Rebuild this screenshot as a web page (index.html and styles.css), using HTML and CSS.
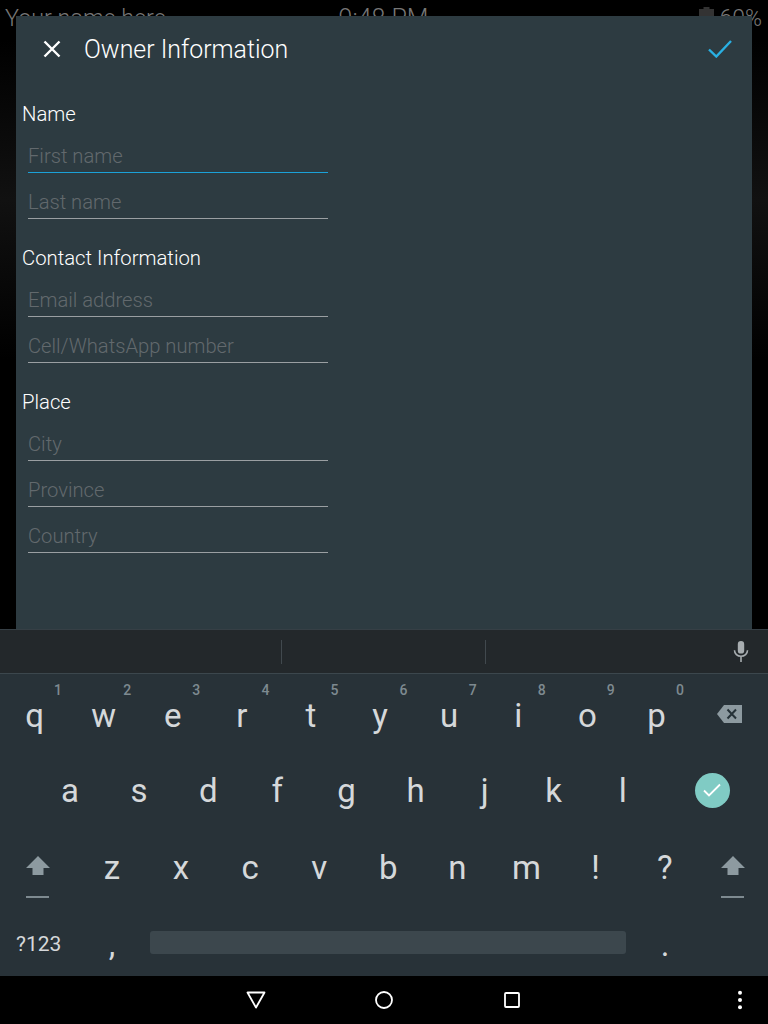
FILE: index.html
```html
<!DOCTYPE html>
<html lang="en">
<head>
  <meta charset="UTF-8" />
  <meta name="viewport" content="width=device-width, initial-scale=1.0" />
  <title>Owner Information</title>
  <link rel="stylesheet" href="styles.css">
</head>
<body>
  <div class="backdrop">
    <div class="status-bar">
      <span class="status-name">Your name here</span>
      <span class="status-time">9:48 PM</span>
      <span class="status-battery">
        <svg width="15" height="22" viewBox="0 0 15 22"><path d="M4.500 0h6v2H15v20H0V2h4.500z" fill="#333"/></svg>
        60%
      </span>
    </div>

    <div class="dialog">
      <header class="dialog-header">
        <button class="icon-btn close-btn" aria-label="Close">
          <svg width="18" height="18" viewBox="0 0 18 18"><path d="M1.500 1.500l15 15M16.500 1.500l-15 15" stroke="#fff" stroke-width="2.400" fill="none"/></svg>
        </button>
        <h1>Owner Information</h1>
        <button class="icon-btn save-btn" aria-label="Save">
          <svg width="24" height="18" viewBox="0 0 24 18"><path d="M1 9.500l7.300 7L23 1" stroke="#29b0e3" stroke-width="2.400" fill="none"/></svg>
        </button>
      </header>

      <form class="owner-form">
        <h2>Name</h2>
        <input class="field focused" type="text" placeholder="First name">
        <input class="field" type="text" placeholder="Last name">

        <h2>Contact Information</h2>
        <input class="field" type="text" placeholder="Email address">
        <input class="field" type="text" placeholder="Cell/WhatsApp number">

        <h2>Place</h2>
        <input class="field" type="text" placeholder="City">
        <input class="field" type="text" placeholder="Province">
        <input class="field" type="text" placeholder="Country">
      </form>
    </div>
  </div>

  <div class="keyboard">
    <div class="suggestions">
      <div class="suggestion"></div>
      <div class="suggestion"></div>
      <div class="suggestion mic-slot">
        <svg width="16" height="21" viewBox="0 0 16 21"><path d="M8 0a3.200 3.200 0 0 0-3.200 3.200v6.200a3.200 3.200 0 0 0 6.400 0V3.200A3.200 3.200 0 0 0 8 0z" fill="#a7adb0"/><path d="M1.500 9.200c0 3.600 2.900 6 6.500 6s6.500-2.400 6.500-6M8 15v6" stroke="#a7adb0" stroke-width="1.600" fill="none"/></svg>
      </div>
    </div>

    <div class="row row-top">
      <div class="key">q<span class="hint">1</span></div>
      <div class="key">w<span class="hint">2</span></div>
      <div class="key">e<span class="hint">3</span></div>
      <div class="key">r<span class="hint">4</span></div>
      <div class="key">t<span class="hint">5</span></div>
      <div class="key">y<span class="hint">6</span></div>
      <div class="key">u<span class="hint">7</span></div>
      <div class="key">i<span class="hint">8</span></div>
      <div class="key">o<span class="hint">9</span></div>
      <div class="key">p<span class="hint">0</span></div>
      <div class="key key-end">
        <svg class="del-icon" width="25" height="18" viewBox="0 0 25 18"><path d="M7 0h18v18H7L0 9z" fill="#8d9aa0"/><path d="M10.500 4.500l8.500 9M19 4.500l-8.500 9" stroke="#263238" stroke-width="2" fill="none"/></svg>
      </div>
    </div>

    <div class="row row-home">
      <div class="key">a</div>
      <div class="key">s</div>
      <div class="key">d</div>
      <div class="key">f</div>
      <div class="key">g</div>
      <div class="key">h</div>
      <div class="key">j</div>
      <div class="key">k</div>
      <div class="key">l</div>
      <div class="key key-enter">
        <span class="enter-circle">
          <svg width="18" height="14" viewBox="0 0 18 14"><path d="M1 7.500l5 5L17 1.500" stroke="#fff" stroke-width="1.800" fill="none"/></svg>
        </span>
      </div>
    </div>

    <div class="row row-shift">
      <div class="key key-wide">
        <svg class="shift-icon" width="24" height="44" viewBox="0 0 24 44"><path d="M12 0l12 12h-6.500v7h-11v-7H0z" fill="#8d9aa0"/><rect y="40" width="23" height="2" fill="#7e8a90"/></svg>
      </div>
      <div class="key">z</div>
      <div class="key">x</div>
      <div class="key">c</div>
      <div class="key">v</div>
      <div class="key">b</div>
      <div class="key">n</div>
      <div class="key">m</div>
      <div class="key">!</div>
      <div class="key">?</div>
      <div class="key key-end">
        <svg class="shift-icon" width="24" height="44" viewBox="0 0 24 44"><path d="M12 0l12 12h-6.500v7h-11v-7H0z" fill="#8d9aa0"/><rect y="40" width="23" height="2" fill="#7e8a90"/></svg>
      </div>
    </div>

    <div class="row row-bottom">
      <div class="key key-wide key-symbols">?123</div>
      <div class="key">,</div>
      <div class="space-key"><span class="space-bar"></span></div>
      <div class="key">.</div>
    </div>
  </div>

  <nav class="nav-bar">
    <svg class="nav-back" width="20" height="18" viewBox="0 0 20 18"><path d="M1.500 1.500h17L10 16.500z" stroke="#fff" stroke-width="1.800" stroke-linejoin="round" fill="none"/></svg>
    <svg class="nav-home" width="20" height="20" viewBox="0 0 20 20"><circle cx="10" cy="10" r="8" stroke="#fff" stroke-width="1.800" fill="none"/></svg>
    <svg class="nav-recent" width="20" height="18" viewBox="0 0 20 18"><rect x="3" y="2" width="14" height="14" rx="1" stroke="#fff" stroke-width="1.800" fill="none"/></svg>
    <svg class="nav-more" width="6" height="20" viewBox="0 0 6 20"><circle cx="3" cy="2.700" r="2" fill="#fff"/><circle cx="3" cy="10" r="2" fill="#fff"/><circle cx="3" cy="17.300" r="2" fill="#fff"/></svg>
  </nav>
</body>
</html>
```

FILE: styles.css
```css
* {
  box-sizing: border-box;
  margin: 0;
  padding: 0;
}
body {
  font-family: Roboto, "Liberation Sans", sans-serif;
  background-color: #000;
  color: #fff;
  width: 768px;
  height: 1024px;
  overflow: hidden;
  display: flex;
  flex-direction: column;
}

.backdrop {
  position: relative;
  height: 629px;
  padding: 16px 16px 0;
  background: linear-gradient(#000 40px, #111 200px, #000 360px);
}

.status-bar {
  position: absolute;
  top: 2px;
  left: 5px;
  right: 6px;
  height: 32px;
  display: grid;
  grid-template-columns: 1fr auto 1fr;
  align-items: center;
  font-size: 23px;
  font-weight: 300;
  color: #777;
}

.status-name {
  font-size: 23.300px;
}

.status-time {
  font-size: 25px;
}

.status-battery {
  justify-self: end;
  display: flex;
  align-items: center;
  gap: 5px;
}

.dialog {
  position: relative;
  height: 100%;
  background-color: #2d3b41;
}

.dialog-header {
  height: 59px;
  display: flex;
  align-items: center;
  padding: 11px 20px 2px 27px;
}

.dialog-header h1 {
  font-size: 24.900px;
  font-weight: 300;
  flex: 1;
  margin-left: 23px;
  margin-bottom: 2px;
}

.icon-btn {
  background: none;
  border: none;
  display: flex;
  margin-bottom: 2px;
}

.owner-form {
  display: flex;
  flex-direction: column;
  align-items: flex-start;
  padding: 0 6px;
}

.owner-form h2 {
  font-size: 20.300px;
  font-weight: 300;
  line-height: 26px;
  padding-top: 26px;
  height: 52px;
}

.field {
  width: 300px;
  height: 46px;
  margin-left: 6px;
  padding-top: 12px;
  background: none;
  border: none;
  border-bottom: 1px solid #9a9fa2;
  outline: none;
  font-family: inherit;
  font-size: 20.200px;
  font-weight: 300;
  color: #fff;
}

.field::placeholder {
  color: #62696d;
  opacity: 1;
}

.field.focused {
  border-bottom-color: #1ba1d8;
}

.keyboard {
  height: 347px;
  background-color: #283238;
  border-top: 1px solid #363f45;
  display: flex;
  flex-direction: column;
}

.suggestions {
  height: 44px;
  flex-shrink: 0;
  background-color: #23282b;
  border-bottom: 1px solid #3c474d;
  display: flex;
  align-items: center;
}

.suggestion {
  height: 24px;
  width: 204px;
}

.suggestion:first-child {
  width: 282px;
  border-right: 1px solid #41494e;
}

.suggestion:nth-child(2) {
  border-right: 1px solid #41494e;
}

.mic-slot {
  flex: 1;
  display: flex;
  justify-content: flex-end;
  align-items: center;
  padding-right: 19px;
}

.row {
  flex: 1;
  display: flex;
}

.row-top .key {
  padding-top: 8px;
}

.row-home {
  padding-left: 35.500px;
}

.row-home .key {
  padding-top: 6px;
}

.row-shift .key {
  padding-top: 10px;
}

.row-bottom .key {
  padding-top: 12px;
}

.key {
  position: relative;
  width: 69.100px;
  display: flex;
  justify-content: center;
  align-items: center;
  font-size: 33px;
  font-weight: 400;
  color: #d5d8da;
}

.hint {
  position: absolute;
  top: 8px;
  right: 4px;
  width: 14px;
  text-align: center;
  font-size: 14px;
  font-weight: 500;
  color: #7e8a90;
}

.key-end {
  flex: 1;
}

.del-icon {
  margin-bottom: 4px;
}

.shift-icon {
  margin-top: 20px;
  margin-right: 2px;
}

.key-enter {
  flex: 1;
  padding-right: 1px;
}

.enter-circle {
  width: 35px;
  height: 35px;
  border-radius: 50%;
  background-color: #80cbc4;
  display: flex;
  justify-content: center;
  align-items: center;
}

.key-wide {
  width: 77.400px;
}

.row-bottom .key-symbols {
  font-size: 21px;
}

.space-key {
  width: 484px;
  padding-top: 8px;
  display: flex;
  justify-content: center;
  align-items: center;
}

.space-bar {
  width: 476px;
  height: 23px;
  border-radius: 3px;
  background-color: #3c474d;
}

.nav-bar {
  height: 48px;
  background-color: #000;
  position: relative;
  display: flex;
  justify-content: center;
  align-items: center;
  gap: 108px;
}

.nav-more {
  position: absolute;
  right: 25px;
  top: 14px;
}
```
